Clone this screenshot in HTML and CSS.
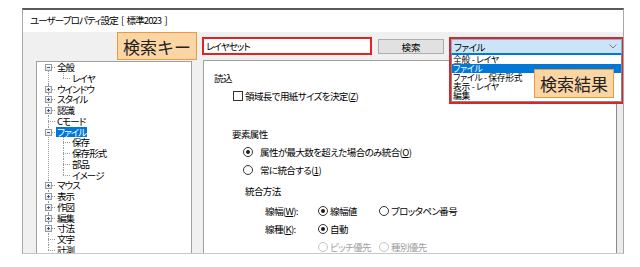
FILE: index.html
```html
<!DOCTYPE html>
<html lang="ja">
<head>
    <meta charset="UTF-8">
    <title>ユーザープロパティ設定</title>
    <link rel="stylesheet" href="styles.css">
</head>
<body>
    <div class="window">
        <div class="titlebar">ユーザープロパティ設定 [ 標準2023 ]</div>
        <div class="body">
            <div class="key-cell">
                <div class="callout key-callout">検索キー</div>
            </div>

            <div class="search-row">
                <input class="search-input" type="text" value="レイヤセット">
                <button class="search-btn">検索</button>
                <div class="result-box">
                    <div class="combo">
                        <span>ファイル</span>
                        <svg class="chevron" width="8" height="5" viewBox="0 0 8 5"><polyline points="0.5,0.5 4,4 7.5,0.5" fill="none" stroke="#7a7a7a" stroke-width="1"/></svg>
                    </div>
                    <ul class="result-list">
                        <li>全般 - レイヤ</li>
                        <li class="sel">ファイル</li>
                        <li>ファイル - 保存形式</li>
                        <li>表示 - レイヤ</li>
                        <li>編集</li>
                    </ul>
                    <div class="callout result-callout">検索結果</div>
                </div>
            </div>

            <div class="tree">
                <ul class="root">
                    <li class="first"><span class="box minus"></span><span class="label">全般</span>
                        <ul>
                            <li class="last"><span class="label">レイヤ</span></li>
                        </ul>
                    </li>
                    <li><span class="box"></span><span class="label">ウインドウ</span></li>
                    <li><span class="box"></span><span class="label">スタイル</span></li>
                    <li><span class="box"></span><span class="label">認識</span></li>
                    <li><span class="label">Cモード</span></li>
                    <li><span class="box minus"></span><span class="label selected">ファイル</span>
                        <ul>
                            <li><span class="label">保存</span></li>
                            <li><span class="label">保存形式</span></li>
                            <li><span class="label">部品</span></li>
                            <li class="last"><span class="label">イメージ</span></li>
                        </ul>
                    </li>
                    <li><span class="box"></span><span class="label">マウス</span></li>
                    <li><span class="box"></span><span class="label">表示</span></li>
                    <li><span class="box"></span><span class="label">作図</span></li>
                    <li><span class="box"></span><span class="label">編集</span></li>
                    <li><span class="box"></span><span class="label">寸法</span></li>
                    <li><span class="label">文字</span></li>
                    <li class="last"><span class="label">計測</span></li>
                </ul>
            </div>

            <div class="panel">
                <div class="panel-body">
                    <div class="line">読込</div>
                    <div class="line check-row"><span class="checkbox"></span>領域長で用紙サイズを決定(<u>Z</u>)</div>

                    <div class="line group-title">要素属性</div>
                    <div class="line radio-row"><span class="radio on"></span>属性が最大数を超えた場合のみ統合(<u>O</u>)</div>
                    <div class="line radio-row"><span class="radio"></span>常に統合する(<u>1</u>)</div>

                    <div class="line sub-title">統合方法</div>
                    <div class="line opt-row">
                        <span class="opt-label">線幅(<u>W</u>):</span>
                        <span class="opt"><span class="radio on"></span>線幅値</span>
                        <span class="opt"><span class="radio"></span>プロッタペン番号</span>
                    </div>
                    <div class="line opt-row">
                        <span class="opt-label">線種(<u>K</u>):</span>
                        <span class="opt"><span class="radio on"></span>自動</span>
                    </div>
                    <div class="line opt-row disabled">
                        <span class="opt-label"></span>
                        <span class="opt"><span class="radio"></span>ピッチ優先</span>
                        <span class="opt"><span class="radio"></span>種別優先</span>
                    </div>
                </div>
                <div class="scrollbar"></div>
            </div>
        </div>
    </div>
</body>
</html>
```

FILE: styles.css
```css
body {
    margin: 0;
    background-color: #fff;
    font-family: "Noto Sans CJK JP", sans-serif;
    font-feature-settings: "palt";
    letter-spacing: -0.5px;
    color: #000;
}

.window {
    margin: 8px 0 0 22px;
    width: 602px;
    height: 246px;
    box-sizing: border-box;
    border-top: 2px solid #5a5a5a;
    border-left: 1px solid #a8a8a8;
    border-right: 1px solid #a8a8a8;
    border-bottom: 1px solid #c8c8c8;
    overflow: hidden;
}

.titlebar {
    height: 22px;
    line-height: 21px;
    padding-left: 7px;
    font-size: 9.5px;
    letter-spacing: -0.9px;
    word-spacing: 2px;
    white-space: pre;
    background-color: #fff;
}

.body {
    height: 221px;
    background-color: #f0f0f0;
    padding-left: 13px;
    display: grid;
    grid-template-columns: 156px 1fr;
    grid-template-rows: 28px 1fr;
    column-gap: 11px;
}

/* callout labels */
.callout {
    background-color: #fcd5a4;
    border: 1.5px solid #ee9a3a;
    color: #222;
    font-size: 17px;
    letter-spacing: 0;
    display: flex;
    align-items: center;
    justify-content: center;
    box-sizing: border-box;
    font-feature-settings: normal;
}

.key-cell {
    display: flex;
    justify-content: flex-end;
    margin-right: -5px;
}

.key-callout {
    width: 80px;
    height: 28px;
}

/* search row */
.search-row {
    display: flex;
    align-items: flex-start;
    padding-top: 5px;
    font-size: 9.5px;
}

.search-input {
    margin: 0 0 0 -1px;
    width: 170px;
    height: 18px;
    box-sizing: border-box;
    border: 2px solid #e02424;
    padding: 0 2px;
    font-family: "Noto Sans CJK JP", sans-serif;
    font-feature-settings: "palt";
    letter-spacing: -0.9px;
    font-size: 9.5px;
    background: #fff;
    outline: none;
}

.search-btn {
    margin: 2px 0 0 6px;
    width: 66px;
    height: 15px;
    box-sizing: border-box;
    padding: 0;
    background-color: #e1e1e1;
    border: 1px solid #adadad;
    font-family: "Noto Sans CJK JP", sans-serif;
    font-size: 9.5px;
    line-height: 12px;
    color: #000;
}

.result-box {
    position: relative;
    z-index: 2;
    margin-left: 5px;
    width: 171px;
    border: 2px solid #e02424;
    background-color: #fff;
}

.combo {
    height: 16px;
    box-sizing: border-box;
    background-color: #cce4f7;
    border: 1px solid #7eb4ea;
    border-bottom: 2px solid #0078d7;
    display: flex;
    align-items: center;
    justify-content: space-between;
    padding: 0 4px 0 2px;
    line-height: 12px;
}

.chevron {
    display: block;
}

.result-list {
    list-style: none;
    margin: 0;
    padding: 0 0 1px 0;
    border: 1px solid #828790;
    border-top: none;
    font-size: 8.8px;
    letter-spacing: -0.3px;
}

.result-list li {
    height: 9px;
    line-height: 9px;
    padding-left: 1px;
}

.result-list li.sel {
    background-color: #0078d7;
    color: #fff;
}

.result-callout {
    position: absolute;
    left: 83px;
    top: 30px;
    width: 80px;
    height: 29px;
}

/* tree */
.tree {
    margin-top: 1px;
    background-color: #fff;
    border: 1px solid #a0a0a0;
    border-bottom: none;
    overflow: hidden;
    font-size: 9.5px;
    line-height: 10.75px;
    letter-spacing: -0.9px;
}

.tree ul {
    list-style: none;
    margin: 0;
    padding: 0;
}

.tree ul.root {
    margin-left: 11px;
}

.tree li ul {
    margin-left: 7px;
}

.tree li {
    position: relative;
    padding-left: 8px;
}

.tree li::before {
    content: "";
    position: absolute;
    left: 0;
    top: 0;
    bottom: 0;
    border-left: 1px dotted #9a9a9a;
}

.tree li.first::before {
    top: 5px;
}

.tree li.last::before {
    bottom: auto;
    height: 5px;
}

.tree li::after {
    content: "";
    position: absolute;
    left: 0;
    top: 5px;
    width: 7px;
    border-top: 1px dotted #9a9a9a;
}

.tree .label {
    display: inline-block;
    vertical-align: top;
    height: 10.75px;
    line-height: 10.75px;
    padding: 0 1px;
    white-space: nowrap;
}

.tree .label.selected {
    background-color: #0078d7;
    color: #fff;
}

.tree .box {
    position: absolute;
    z-index: 1;
    left: -3px;
    top: 2px;
    width: 7px;
    height: 7px;
    box-sizing: border-box;
    border: 1px solid #9a9a9a;
    background: linear-gradient(#fff, #e4e4e4);
}

.tree .box::before {
    content: "";
    position: absolute;
    left: 1px;
    top: 2px;
    width: 3px;
    height: 1px;
    background-color: #2a5aa8;
}

.tree .box::after {
    content: "";
    position: absolute;
    left: 2px;
    top: 1px;
    width: 1px;
    height: 3px;
    background-color: #2a5aa8;
}

.tree .box.minus::after {
    display: none;
}

/* settings panel */
.panel {
    display: flex;
}

.panel-body {
    flex: 1;
    background-color: #fff;
    border-top: 1px solid #a0a0a0;
    border-left: 1px solid #a0a0a0;
    padding: 8px 0 0 10px;
    font-size: 9.5px;
    letter-spacing: -0.6px;
}

.scrollbar {
    width: 7px;
    background-color: #ebebeb;
    border-left: 1px solid #8a8a8a;
}

.line {
    height: 18px;
    display: flex;
    align-items: center;
    white-space: nowrap;
}

.check-row {
    margin-left: 19px;
}

.group-title {
    margin-top: 20px;
    margin-left: 18px;
}

.radio-row {
    margin-left: 29px;
}

.sub-title {
    margin-top: 3px;
    margin-left: 31px;
}

.opt-row {
    margin-left: 51px;
}

.sub-title + .opt-row {
    margin-top: 2px;
}

.opt-label {
    width: 53px;
}

.opt {
    display: flex;
    align-items: center;
    width: 61px;
}

.checkbox {
    width: 10px;
    height: 10px;
    box-sizing: border-box;
    border: 1px solid #333;
    margin-right: 2px;
    background: #fff;
}

.radio {
    width: 10px;
    height: 10px;
    box-sizing: border-box;
    border: 1px solid #333;
    border-radius: 50%;
    display: inline-flex;
    align-items: center;
    justify-content: center;
    margin-right: 7px;
    flex-shrink: 0;
}

.opt .radio {
    margin-right: 2px;
}

.radio.on::after {
    content: "";
    width: 4px;
    height: 4px;
    border-radius: 50%;
    background-color: #1a1a1a;
}

.disabled {
    color: #a0a0a0;
}

.disabled .radio {
    border-color: #c4c4c4;
}
```
